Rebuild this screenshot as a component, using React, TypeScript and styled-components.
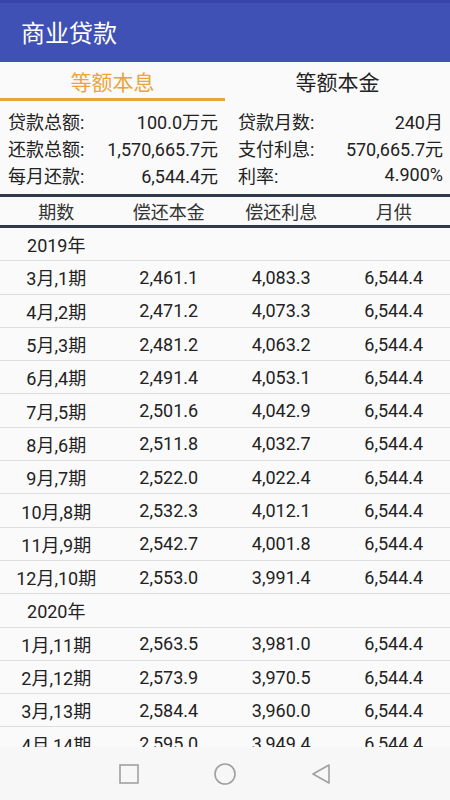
import React from 'react';
import styled, { createGlobalStyle } from 'styled-components';

const GlobalStyle = createGlobalStyle`
  html, body {
    margin: 0;
    padding: 0;
    background: #fafafa;
  }
  body {
    font-family: Roboto, "Noto Sans CJK SC", "Noto Sans", sans-serif;
    color: #212121;
  }
`;

const Page = styled.div`
  display: flex;
  flex-direction: column;
  width: 450px;
  height: 800px;
  overflow: hidden;
  background: #fafafa;
`;

const AppBar = styled.div`
  display: flex;
  align-items: center;
  height: 59px;
  padding-left: 21px;
  padding-bottom: 3px;
  box-sizing: border-box;
  border-top: 3px solid #3546a8;
  background: #3f51b5;
  color: #fff;
  font-size: 24px;
  height: 62px;
`;

const Tabs = styled.div`
  display: flex;
  height: 39px;
`;

const Tab = styled.div<{ active?: boolean }>`
  flex: 1;
  display: flex;
  align-items: center;
  justify-content: center;
  font-size: 21px;
  color: ${({ active }) => (active ? '#eaa43a' : '#222')};
  border-bottom: 3px solid ${({ active }) => (active ? '#eaa43a' : 'transparent')};
  padding-top: 1px;
`;

const Summary = styled.div`
  display: grid;
  grid-template-columns: 210px 205px;
  column-gap: 20px;
  padding: 6px 7px 6px 8px;
`;

const SummaryItem = styled.div`
  display: flex;
  justify-content: space-between;
  align-items: center;
  height: 27px;
  font-size: 18px;
  color: #222;
`;

const HeavyRule = styled.div`
  height: 3px;
  background: #2f3b4a;
`;

const Row = styled.div<{ header?: boolean }>`
  display: grid;
  grid-template-columns: repeat(4, 1fr);
  align-items: center;
  height: ${({ header }) => (header ? '28px' : '33.3px')};
  box-sizing: border-box;
  border-bottom: ${({ header }) => (header ? 'none' : '1px solid #dedede')};
  font-size: 18px;
  color: ${({ header }) => (header ? '#333' : '#222')};
`;

const Cell = styled.div`
  text-align: center;
  white-space: nowrap;
`;

const List = styled.div`
  flex: 1;
  overflow: hidden;
`;

const NavBar = styled.div`
  display: flex;
  align-items: center;
  justify-content: center;
  gap: 72px;
  height: 53px;
  background: #f7f7f7;
`;

const NavIcon = styled.svg`
  width: 24px;
  height: 24px;
  stroke: #a0a0a0;
  stroke-width: 1.6;
  fill: none;
`;

type Payment = { label: string; principal: string; interest: string; total: string };
type Group = { year: string; items: Payment[] };

const groups: Group[] = [
  {
    year: '2019年',
    items: [
      ['3月,1期', '2,461.1', '4,083.3'],
      ['4月,2期', '2,471.2', '4,073.3'],
      ['5月,3期', '2,481.2', '4,063.2'],
      ['6月,4期', '2,491.4', '4,053.1'],
      ['7月,5期', '2,501.6', '4,042.9'],
      ['8月,6期', '2,511.8', '4,032.7'],
      ['9月,7期', '2,522.0', '4,022.4'],
      ['10月,8期', '2,532.3', '4,012.1'],
      ['11月,9期', '2,542.7', '4,001.8'],
      ['12月,10期', '2,553.0', '3,991.4'],
    ].map(([label, principal, interest]) => ({ label, principal, interest, total: '6,544.4' })),
  },
  {
    year: '2020年',
    items: [
      ['1月,11期', '2,563.5', '3,981.0'],
      ['2月,12期', '2,573.9', '3,970.5'],
      ['3月,13期', '2,584.4', '3,960.0'],
      ['4月,14期', '2,595.0', '3,949.4'],
    ].map(([label, principal, interest]) => ({ label, principal, interest, total: '6,544.4' })),
  },
];

const summary: [string, string][] = [
  ['贷款总额:', '100.0万元'],
  ['贷款月数:', '240月'],
  ['还款总额:', '1,570,665.7元'],
  ['支付利息:', '570,665.7元'],
  ['每月还款:', '6,544.4元'],
  ['利率:', '4.900%'],
];

const App: React.FC = () => {
  return (
    <Page>
      <GlobalStyle />
      <AppBar>商业贷款</AppBar>
      <Tabs>
        <Tab active>等额本息</Tab>
        <Tab>等额本金</Tab>
      </Tabs>
      <Summary>
        {summary.map(([label, value]) => (
          <SummaryItem key={label}>
            <span>{label}</span>
            <span>{value}</span>
          </SummaryItem>
        ))}
      </Summary>
      <HeavyRule />
      <Row header>
        <Cell>期数</Cell>
        <Cell>偿还本金</Cell>
        <Cell>偿还利息</Cell>
        <Cell>月供</Cell>
      </Row>
      <HeavyRule />
      <List>
        {groups.map((g) => (
          <React.Fragment key={g.year}>
            <Row>
              <Cell>{g.year}</Cell>
            </Row>
            {g.items.map((p) => (
              <Row key={p.label}>
                <Cell>{p.label}</Cell>
                <Cell>{p.principal}</Cell>
                <Cell>{p.interest}</Cell>
                <Cell>{p.total}</Cell>
              </Row>
            ))}
          </React.Fragment>
        ))}
      </List>
      <NavBar>
        <NavIcon viewBox="0 0 24 24">
          <rect x="3" y="3" width="18" height="18" />
        </NavIcon>
        <NavIcon viewBox="0 0 24 24">
          <circle cx="12" cy="12" r="10" />
        </NavIcon>
        <NavIcon viewBox="0 0 24 24">
          <path d="M20 3 L4 12 L20 21 Z" strokeLinejoin="round" />
        </NavIcon>
      </NavBar>
    </Page>
  );
};

export default App;
